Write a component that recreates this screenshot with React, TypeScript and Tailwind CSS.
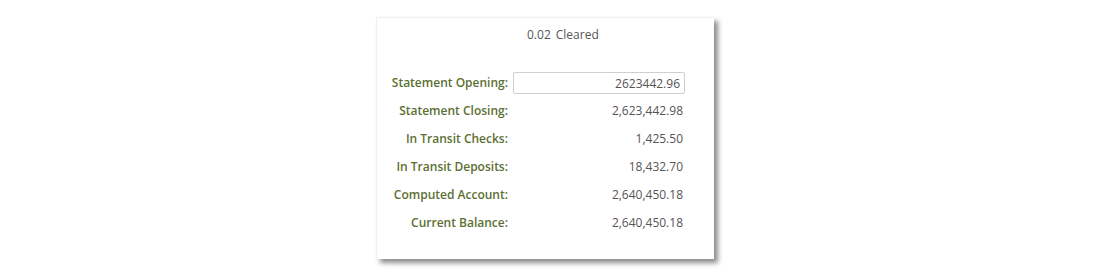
const rows = [
  { label: 'Statement Closing:', value: '2,623,442.98' },
  { label: 'In Transit Checks:', value: '1,425.50' },
  { label: 'In Transit Deposits:', value: '18,432.70' },
  { label: 'Computed Account:', value: '2,640,450.18' },
  { label: 'Current Balance:', value: '2,640,450.18' },
];

export default function App() {
  return (
    <main className="min-h-[272px] w-full bg-white pt-[17px] font-['Open_Sans',sans-serif] text-[12px]">
      <div className="ml-[376px] w-[338px] bg-white pt-[7px] pb-[22px] shadow-[4px_4px_5px_rgba(0,0,0,0.45)] border-t border-l border-[#f0f0f0]">
        <div className="pl-[150px] leading-[20px] text-[#555]">
          0.02<span className="ml-[5px]">Cleared</span>
        </div>

        <div className="mt-[24px] grid grid-cols-[131px_172px] gap-x-[5px]">
          <div className="flex h-[28px] items-center justify-end font-semibold text-[#5b7033]">
            Statement Opening:
          </div>
          <div className="flex h-[28px] items-center">
            <input
              className="h-[22px] w-full rounded-[2px] border border-[#cfcfcf] bg-white pr-[4px] text-right text-[12px] text-[#555] outline-none"
              defaultValue="2623442.96"
            />
          </div>
          {rows.map((r) => (
            <>
              <div
                key={r.label}
                className="flex h-[28px] items-center justify-end font-semibold text-[#5b7033]"
              >
                {r.label}
              </div>
              <div className="flex h-[28px] items-center justify-end pr-[2px] text-[#555]">
                {r.value}
              </div>
            </>
          ))}
        </div>
      </div>
    </main>
  );
}
